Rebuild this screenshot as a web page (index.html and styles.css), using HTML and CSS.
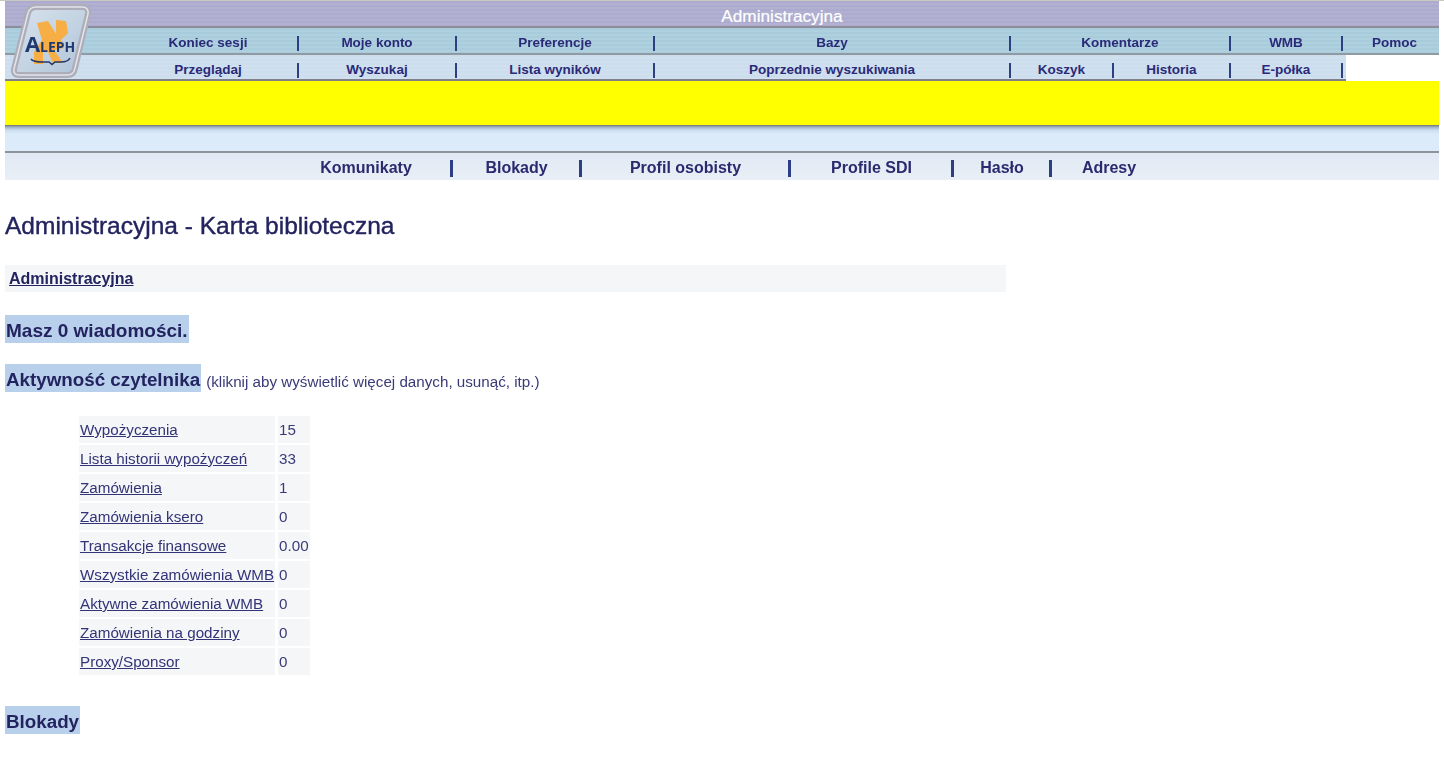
FILE: index.html
```html
<!DOCTYPE html>
<html lang="pl">
<head>
<meta charset="utf-8">
<title>Administracyjna - Karta biblioteczna</title>
<link rel="stylesheet" href="styles.css">
</head>
<body>
<div class="page">
  <header class="header">
    <svg class="logo" width="90" height="82" viewBox="0 0 90 82" aria-hidden="true">
      <defs>
        <linearGradient id="lg" x1="0" y1="0" x2="1" y2="1">
          <stop offset="0" stop-color="#d8e2ec"/><stop offset=".5" stop-color="#c4d4e3"/><stop offset="1" stop-color="#aec2d6"/>
        </linearGradient>
      </defs>
      <path d="M22 13 Q24 7 30 7 L76 7 Q83 7 82 14 L69 68 Q68 75 61 75 L13 75 Q7 75 8 69 Z" fill="url(#lg)" stroke="#aeaeba" stroke-width="6"/>
      <path d="M22 13 Q24 7 30 7 L76 7 Q83 7 82 14 L69 68 Q68 75 61 75 L13 75 Q7 75 8 69 Z" fill="none" stroke="#e2e4ea" stroke-width="1.5"/>
      <path d="M31 23 L42 21 L50 34 L50 20 L60 21 L62 33 L55 40 L58 48 L48 50 L57 63 L47 63 L42 52 L37 52 L37 64 L28 64 L28 52 L36 40 Z" fill="#f6ae45"/>
      <path d="M25 59 Q27 62 37 62 L43 62 L46 64.5 L49 62 L55 62 Q62 62 64 58" fill="none" stroke="#23386b" stroke-width="1.5"/>
      <text x="19" y="52" class="logo-a">A</text>
      <text x="34" y="52" class="logo-t">LEPH</text>
    </svg>
    <div class="title-bar"><span class="title-text">Administracyjna</span></div>
    <nav class="menu menu-top">
      <a class="cell w-first">Koniec sesji</a>
      <a class="cell w-158">Moje konto</a>
      <a class="cell w-198">Preferencje</a>
      <a class="cell w-356">Bazy</a>
      <a class="cell w-220">Komentarze</a>
      <a class="cell w-112">WMB</a>
      <a class="cell cell-last">Pomoc</a>
    </nav>
    <nav class="menu menu-bottom">
      <a class="cell w-first">Przeglądaj</a>
      <a class="cell w-158">Wyszukaj</a>
      <a class="cell w-198">Lista wyników</a>
      <a class="cell w-356">Poprzednie wyszukiwania</a>
      <a class="cell w-103">Koszyk</a>
      <a class="cell w-117">Historia</a>
      <a class="cell w-112">E-półka</a>
    </nav>
  </header>
  <div class="notice"></div>
  <div class="band"></div>
  <nav class="subnav">
    <a class="sub s-172">Komunikaty</a>
    <a class="sub s-129">Blokady</a>
    <a class="sub s-209">Profil osobisty</a>
    <a class="sub s-163">Profile SDI</a>
    <a class="sub s-98">Hasło</a>
    <a class="sub sub-last s-116">Adresy</a>
  </nav>
  <main class="content">
    <h1 class="page-title">Administracyjna - Karta biblioteczna</h1>
    <div class="library"><a class="library-link" href="#">Administracyjna</a></div>
    <h2 class="section section-messages"><span class="mark">Masz 0 wiadomości.</span></h2>
    <h2 class="section section-activity"><span class="mark">Aktywność czytelnika</span> <small class="hint">(kliknij aby wyświetlić więcej danych, usunąć, itp.)</small></h2>
    <table class="activity">
      <tr><td><a href="#">Wypożyczenia</a></td><td>15</td></tr>
      <tr><td><a href="#">Lista historii wypożyczeń</a></td><td>33</td></tr>
      <tr><td><a href="#">Zamówienia</a></td><td>1</td></tr>
      <tr><td><a href="#">Zamówienia ksero</a></td><td>0</td></tr>
      <tr><td><a href="#">Transakcje finansowe</a></td><td>0.00</td></tr>
      <tr><td><a href="#">Wszystkie zamówienia WMB</a></td><td>0</td></tr>
      <tr><td><a href="#">Aktywne zamówienia WMB</a></td><td>0</td></tr>
      <tr><td><a href="#">Zamówienia na godziny</a></td><td>0</td></tr>
      <tr><td><a href="#">Proxy/Sponsor</a></td><td>0</td></tr>
    </table>
    <h2 class="section section-blocks"><span class="mark">Blokady</span></h2>
  </main>
</div>
</body>
</html>
```
FILE: styles.css
```css
* { box-sizing: border-box; }
html, body { margin: 0; padding: 0; background: #fff; overflow: hidden; }
body { font-family: "Liberation Sans", Arial, sans-serif; color: #2a2a6e; height: 773px; }
.page { padding: 1px 5px 0; filter: blur(0.45px); position: relative; }
.page::before { content: ""; position: absolute; left: 0; right: 0; top: 0; height: 1px; background: #c9c9c0; }

.header { position: relative; }
.logo { position: absolute; left: 1px; top: -1px; z-index: 2; }
.logo-a { font: 700 22px "Open Sans", sans-serif; fill: #1f3a70; }
.logo-t { font: 700 14px "Open Sans", sans-serif; fill: #1f3a70; }

.title-bar {
  height: 27px; display: flex; justify-content: center; align-items: center; padding: 6px 0 0 114px;
  border-bottom: 2px solid #8e8e9a;
  background: repeating-linear-gradient(#acaace 0 2px, #b3b1d1 2px 4px);
}
.title-text { color: #fff; font-size: 17.2px; margin-left: 6px; -webkit-text-stroke: 0.2px #fff; }

.menu { display: flex; font-size: 13.5px; font-weight: 700; color: #2a2a78; }
.menu-top { height: 27px; padding-top: 4px; border-bottom: 2px solid #8f9aa2; background: repeating-linear-gradient(#a9ccdc 0 2px, #afd0de 2px 4px); }
.menu-bottom { height: 26px; padding-top: 5px; width: 1341px; border-bottom: 2px solid #80808a; background: repeating-linear-gradient(#ccdded 0 2px, #d1e0ee 2px 4px); }
.cell { display: flex; align-items: center; justify-content: center; position: relative; flex: none; }
.cell::after { content: ""; position: absolute; right: -1px; top: 50%; margin-top: -7px; width: 2px; height: 15px; background: #2d3f82; }
.cell-last { flex: 1; padding-left: 8px; }
.cell-last::after { display: none; }
.w-first { width: 293px; padding-left: 113px; }
.w-158 { width: 158px; }
.w-198 { width: 198px; }
.w-356 { width: 356px; }
.w-220 { width: 220px; }
.w-112 { width: 112px; }
.w-103 { width: 103px; }
.w-117 { width: 117px; }

.notice { height: 44px; background: #ffff00; }
.band { height: 28px; border-bottom: 2px solid #8f949a; background: linear-gradient(#6a7078 0, #9fb0c2 2px, #c9dcef 5px, #dcebfa 9px); }
.subnav { height: 27px; display: flex; padding: 2px 0 0 275px; font-size: 16px; font-weight: 700; color: #2a2a6e; background: linear-gradient(#e0e9f4, #e9eff6); }
.sub { flex: none; display: flex; align-items: center; justify-content: center; position: relative; }
.sub::after { content: ""; position: absolute; right: -1px; top: 50%; margin-top: -8px; width: 3px; height: 17px; background: #2d3f82; }
.sub-last::after { display: none; }
.s-172 { width: 172px; }
.s-129 { width: 129px; }
.s-209 { width: 209px; }
.s-163 { width: 163px; }
.s-98 { width: 98px; }
.s-116 { width: 116px; }

.page-title { margin: 32px 0 0; font-size: 24.5px; line-height: 27px; font-weight: 400; color: #23235f; -webkit-text-stroke: 0.4px #23235f; }
.library { margin-top: 26px; width: 1001px; height: 27px; padding: 1px 0 0 4px; background: #f5f6f8; display: flex; align-items: center; }
.library-link { font-size: 16px; font-weight: 700; color: #23235f; }
.section { margin: 0; display: flex; align-items: flex-start; height: 28px; font-size: 18.8px; font-weight: 700; color: #23235f; }
.section-messages { margin-top: 23px; font-size: 19px; }
.section-activity { margin-top: 21px; }
.section-blocks { margin-top: 29px; }
.mark { background: #b9d0ec; height: 28px; line-height: 32px; padding: 0 1px; white-space: nowrap; }
.hint { margin-left: 5px; font-size: 15.2px; line-height: 35px; font-weight: 400; color: #3a3a78; }
.activity { margin: 22px 0 0 71px; border-collapse: separate; border-spacing: 3px 2px; font-size: 15.2px; color: #3a3a78; }
.activity td { background: #f5f6f8; height: 27px; padding: 0 1px; }
.activity a { color: #333378; }
```
